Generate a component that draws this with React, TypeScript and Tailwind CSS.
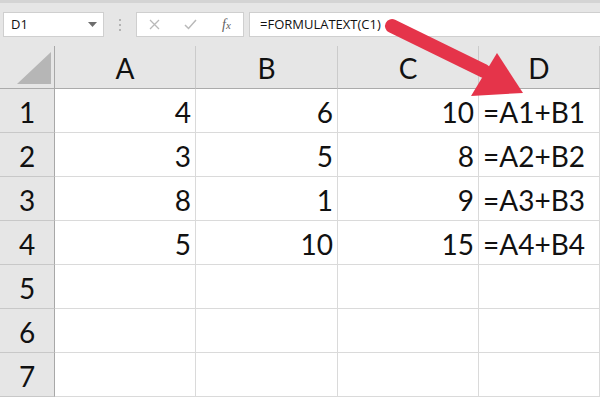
import React from "react";

const cols = ["A", "B", "C", "D"];

const rows: string[][] = [
  ["4", "6", "10", "=A1+B1"],
  ["3", "5", "8", "=A2+B2"],
  ["8", "1", "9", "=A3+B3"],
  ["5", "10", "15", "=A4+B4"],
  ["", "", "", ""],
  ["", "", "", ""],
  ["", "", "", ""],
];

function Arrow() {
  return (
    <svg
      className="absolute left-0 top-0 pointer-events-none"
      width="600"
      height="400"
      viewBox="0 0 600 400"
    >
      <line
        x1="392"
        y1="26"
        x2="484"
        y2="71"
        stroke="#e5344a"
        strokeWidth="14"
        strokeLinecap="round"
      />
      <polygon points="497,53 471,96 523,93" fill="#e5344a" />
    </svg>
  );
}

export default function App() {
  return (
    <div
      className="relative w-[600px] h-[400px] overflow-hidden bg-white text-[#111]"
      style={{ fontFamily: "Lato, 'Open Sans', sans-serif" }}
    >
      {/* toolbar */}
      <div className="h-[46px] flex items-center bg-[#e6e6e6] border-t-[3px] border-[#d4d4d4]">
        <div className="ml-[3px] w-[101px] h-[25px] flex items-center justify-between pl-[7px] pr-[6px] bg-white border border-[#cfcfcf]">
          <span className="text-[13px] font-['Open_Sans',sans-serif]">D1</span>
          <svg width="9" height="6" viewBox="0 0 9 6">
            <polygon points="0,0 9,0 4.5,5" fill="#6d6d6d" />
          </svg>
        </div>
        <div className="w-[32px] flex flex-col items-center gap-[3px]">
          <span className="w-[2px] h-[2px] bg-[#b3b3b3]" />
          <span className="w-[2px] h-[2px] bg-[#b3b3b3]" />
          <span className="w-[2px] h-[2px] bg-[#b3b3b3]" />
        </div>
        <div className="w-[108px] h-[25px] flex items-center bg-white border border-[#cfcfcf]">
          <svg className="ml-[12px]" width="11" height="11" viewBox="0 0 11 11">
            <path d="M1 1L10 10M10 1L1 10" stroke="#b9b9b9" strokeWidth="1.3" />
          </svg>
          <svg className="ml-[24px]" width="13" height="11" viewBox="0 0 13 11">
            <path d="M1 6L4.5 9.5L12 1" stroke="#b9b9b9" strokeWidth="1.5" fill="none" />
          </svg>
          <span className="ml-[25px] text-[14px] italic text-[#5f5f5f] font-['Liberation_Serif',serif]">
            f<span className="text-[11px]">x</span>
          </span>
        </div>
        <div className="ml-[5px] flex-1 h-[25px] flex items-center pl-[10px] bg-white border-y border-l border-[#cfcfcf]">
          <span className="text-[13px] font-['Open_Sans',sans-serif]">=FORMULATEXT(C1)</span>
        </div>
      </div>

      {/* sheet */}
      <div className="grid grid-cols-[55px_141px_142px_141px_1fr]">
        <div className="h-[43px] relative bg-[#e6e6e6] border-r border-b border-r-[#a8a8a8] border-b-[#ababab]">
          <svg className="absolute left-[17px] top-[6px]" width="35" height="33" viewBox="0 0 35 33">
            <polygon points="0,32 34,32 34,0" fill="#b6b6b6" />
          </svg>
        </div>
        {cols.map((c) => (
          <div
            key={c}
            className="h-[43px] flex items-end justify-center pb-[6px] leading-none text-[28px] bg-[#e6e6e6] border-r border-b border-r-[#cbcbcb] border-b-[#ababab]"
          >
            {c}
          </div>
        ))}
        {rows.map((r, i) => (
          <React.Fragment key={i}>
            <div className="h-[44px] flex items-end justify-center pb-[6px] leading-none text-[28px] bg-[#e6e6e6] border-r border-b border-r-[#a8a8a8] border-b-[#c8c8c8]">
              {i + 1}
            </div>
            {r.map((v, j) => (
              <div
                key={j}
                className={
                  j === 3
                    ? "h-[44px] flex items-end justify-start pl-[4px] pb-[6px] leading-none text-[28px] border-r border-b border-[#dadada]"
                    : "h-[44px] flex items-end justify-end pr-[4px] pb-[6px] leading-none text-[28px] border-r border-b border-[#dadada]"
                }
              >
                {v}
              </div>
            ))}
          </React.Fragment>
        ))}
      </div>

      <Arrow />
    </div>
  );
}
